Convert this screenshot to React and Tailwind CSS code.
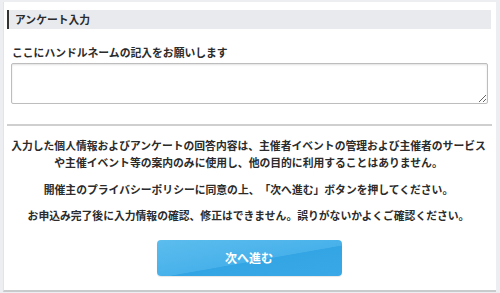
export default function App() {
  const font = { fontFamily: '"Noto Sans CJK JP", "Noto Sans", sans-serif' };
  return (
    <div
      className="w-[500px] h-[293px] bg-[#eceef2] pt-[2px] pl-[3px] pr-[4px] overflow-hidden [text-spacing-trim:space-all]"
      style={font}
    >
      <div className="bg-white h-[290px] border-l border-[#e2e4e8] border-b-2 border-b-[#c9cacc] pt-[8px] pl-[2px] pr-[5px] flex flex-col text-[#2b2b2b]">
        <div className="h-[19px] ml-[1px] bg-[#e8eaee] border-l-2 border-[#333] pl-[6px] flex items-center text-[10.8px] font-semibold leading-none">
          アンケート入力
        </div>
        <div className="mt-[15px] pl-[6px] text-[10.8px] font-semibold leading-[16px]">
          ここにハンドルネームの記入をお願いします
        </div>
        <textarea className="mt-[3px] ml-[5px] w-[477px] h-[41px] border border-[#bdbdbd] rounded-[2px] shadow-[inset_0_1px_2px_rgba(0,0,0,0.12)] resize-y block" />
        <div className="mt-[20px] ml-[1px] h-[2px] bg-[#cfcfcf] w-[485px]" />
        <div className="mt-[11px] text-center text-[10.8px] font-semibold leading-[17px] px-[4px]">
          <p>
            入力した個人情報およびアンケートの回答内容は、主催者イベントの管理および主催者のサービス
            <br />
            や主催イベント等の案内のみに使用し、他の目的に利用することはありません。
          </p>
          <p className="mt-[10px]">
            開催主のプライバシーポリシーに同意の上、「次へ進む」ボタンを押してください。
          </p>
          <p className="mt-[9px]">
            お申込み完了後に入力情報の確認、修正はできません。誤りがないかよくご確認ください。
          </p>
        </div>
        <div className="mt-[16px] flex justify-center pl-[1px]">
          <button className="w-[185px] h-[36px] rounded-[4px] text-white font-bold text-[12px] bg-[linear-gradient(170deg,#5cbdee_0%,#48b1ea_55%,#34a5e4_56%,#3aa8e6_100%)] shadow-[0_1px_1px_rgba(0,0,0,0.1)]">
            次へ進む
          </button>
        </div>
      </div>
    </div>
  );
}
